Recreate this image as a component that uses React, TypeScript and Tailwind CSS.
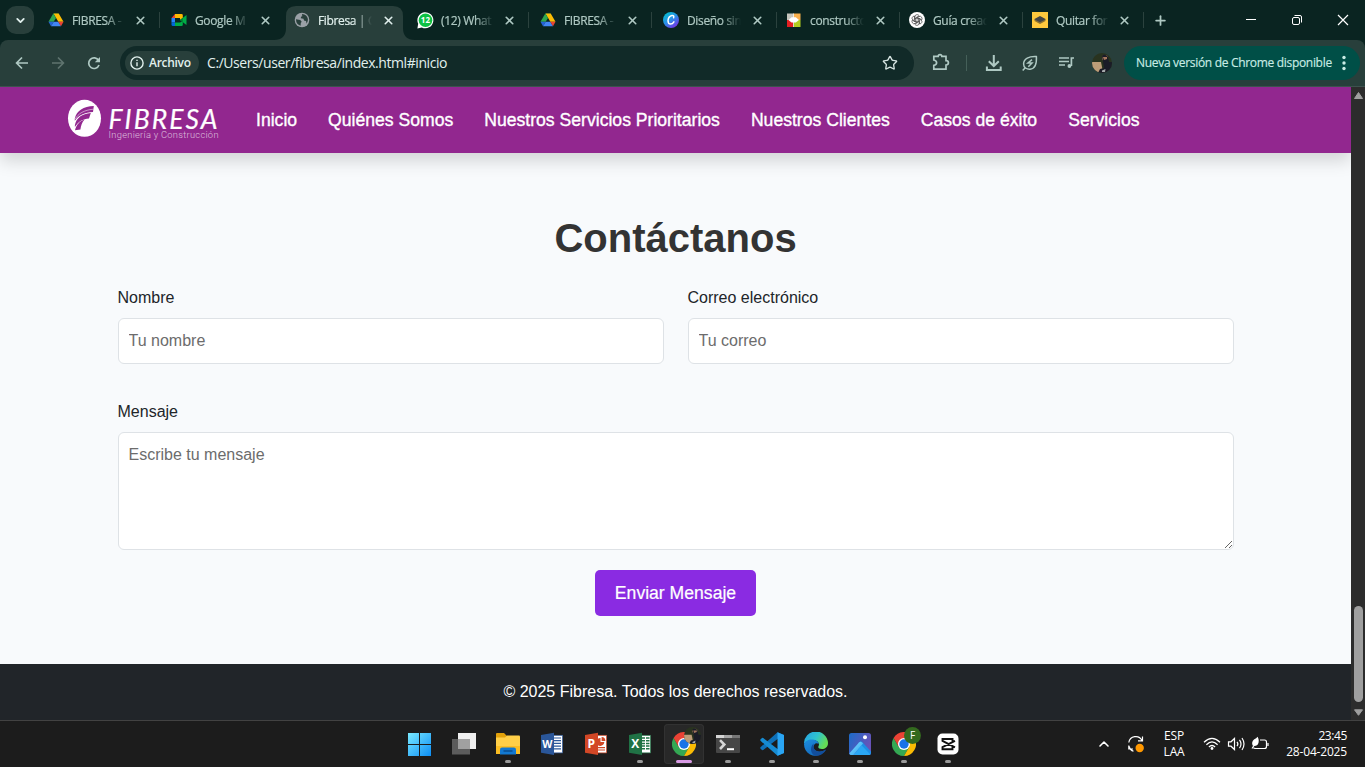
import React from "react";
import { Star, X, Plus, ChevronDown, ChevronUp } from "lucide-react";

const ui = "font-['Open_Sans','Noto_Sans',sans-serif]";

/* ---------- favicons ---------- */

function DriveIcon() {
  return (
    <svg width="16" height="16" viewBox="0 0 16 16">
      <path d="M5.3 1.5 L10.7 1.5 L8 5.8 Z" fill="#188038" />
      <path d="M10.7 1.5 L15.5 9.8 L10.3 9.8 L8 5.8 L5.5 1.5 Z" fill="#fbbc04" />
      <path d="M5.3 1.5 L8 6 L5.7 9.8 L0.5 9.8 Z" fill="#2fa84f" />
      <path d="M0.5 9.8 L5.7 9.8 L3 14.2 Z" fill="#2563d8" />
      <path d="M5.7 9.8 L10.3 9.8 L13 14.2 L3 14.2 Z" fill="#4285f4" />
      <path d="M10.3 9.8 L15.5 9.8 L13 14.2 Z" fill="#ea4335" />
    </svg>
  );
}

function MeetIcon() {
  return (
    <svg width="16" height="16" viewBox="0 0 16 16">
      <path d="M4 2 V6 H0.5 Z" fill="#ea4335" />
      <path d="M0.5 6 H4 V10.5 H0.5 Z" fill="#2684fc" />
      <path d="M0.5 10.5 H4 V14 H2 Q0.5 14 0.5 12.5 Z" fill="#0066da" />
      <path d="M4 10.5 H9 L11.8 9 V12.8 Q11.8 14 10.5 14 H4 Z" fill="#00ac47" />
      <path d="M4 2 H10.5 Q11.8 2 11.8 3.3 V6 L9 8 V6 H4 Z" fill="#ffba00" />
      <path d="M9 8 L15.5 3 V13 Z" fill="#00ac47" />
      <path d="M9 8 L11.8 5.8 V10.3 Z" fill="#00832d" />
    </svg>
  );
}

function GlobeIcon() {
  return (
    <svg width="16" height="16" viewBox="0 0 16 16">
      <circle cx="8" cy="8" r="7.3" fill="#9aa0a6" />
      <path d="M2 7.3 L6.2 8 L7.7 9.8 L6.8 11 L6.6 13.8 Q2 12.3 2 7.3 Z" fill="#283f3b" />
      <path d="M8.2 2 Q7.3 3.4 8.6 4.1 Q6.4 4.4 6.8 6.2 L9.5 6.7 Q9.7 9.3 12 8.8 L12.6 11.7 Q14.2 9.6 13.9 7 Q13 2.4 8.2 2 Z" fill="#283f3b" />
    </svg>
  );
}

function WhatsIcon() {
  return (
    <svg width="17" height="17" viewBox="0 0 17 17" className="shrink-0">
      <path d="M0.4 16.5 L1.2 11.8 A8 8 0 1 1 4.8 15.4 Z" fill="#fff" />
      <circle cx="8.5" cy="8.2" r="6.8" fill="#0dc143" />
      <text x="8.4" y="11.1" textAnchor="middle" fontSize="8" fontWeight="700" fill="#fff" fontFamily="Open Sans">12</text>
    </svg>
  );
}

function CanvaIcon() {
  return (
    <svg width="16" height="16" viewBox="0 0 16 16">
      <defs>
        <linearGradient id="canva" x1="0.1" y1="0" x2="0.8" y2="1">
          <stop offset="0" stopColor="#00c4cc" />
          <stop offset="0.5" stopColor="#2a8fe8" />
          <stop offset="1" stopColor="#7d2ae8" />
        </linearGradient>
      </defs>
      <circle cx="8" cy="8" r="8" fill="url(#canva)" />
      <path d="M10.6 5.8 Q11.4 3.3 9 3.5 Q5.4 4.2 5 8.5 Q5 12 7.5 12.1 Q9.6 12 10.9 9.8" fill="none" stroke="#fff" strokeWidth="1.5" strokeLinecap="round" />
    </svg>
  );
}

function MosaicIcon() {
  return (
    <svg width="16" height="16" viewBox="0 0 16 16">
      <path d="M1 1.5 H7.5 V8 H1 Z" fill="#c5c5bd" />
      <path d="M7.5 1.5 H14.5 V8 H7.5 Z" fill="#f9b04c" />
      <path d="M1 8 H7.5 V15 H1 Z" fill="#e51f22" />
      <path d="M8 8 H14.5 V15 H8 Z" fill="#b3cd1f" />
      <path d="M7.5 1.5 V15" stroke="#fff" strokeWidth="0.8" />
      <path d="M5.5 5.2 H9.8 L13 8 L9.8 10.6 H5.5 L2.5 8 Z" fill="#fff" />
    </svg>
  );
}

function GptIcon() {
  return (
    <svg width="16" height="16" viewBox="0 0 16 16">
      <circle cx="8" cy="8" r="8" fill="#fff" />
      <g fill="none" stroke="#333" strokeWidth="0.65">
        {[0, 60, 120, 180, 240, 300].map((a) => (
          <path key={a} d="M6 9.2 V4.6 Q6.1 2.6 8 2.6 Q9.4 2.6 10.2 3.8 L7.2 5.5 V7.5" transform={`rotate(${a} 8 8)`} />
        ))}
      </g>
    </svg>
  );
}

function LayersIcon() {
  return (
    <svg width="16" height="16" viewBox="0 0 16 16">
      <path d="M0 0 H16 V16 H0 Z" fill="#ffc83d" />
      <path d="M8 5.5 L14 8.8 L8 12 L2 8.8 Z" fill="#8d7231" />
      <path d="M8 4 L14 7.2 L8 10.3 L2 7.2 Z" fill="#454545" />
    </svg>
  );
}

interface TabData {
  title: string;
  icon: React.ReactNode;
  active?: boolean;
  line?: boolean;
}

const tabs: TabData[] = [
  { title: "FIBRESA -", icon: <DriveIcon />, line: true },
  { title: "Google M", icon: <MeetIcon /> },
  { title: "Fibresa | C", icon: <GlobeIcon />, active: true },
  { title: "(12) What", icon: <WhatsIcon />, line: true },
  { title: "FIBRESA -", icon: <DriveIcon />, line: true },
  { title: "Diseño sin", icon: <CanvaIcon />, line: true },
  { title: "constructo", icon: <MosaicIcon />, line: true },
  { title: "Guía creac", icon: <GptIcon />, line: true },
  { title: "Quitar for", icon: <LayersIcon />, line: true },
];

function Tab({ title, icon, active, line }: TabData) {
  return (
    <div className="relative h-10 w-[123px] shrink-0">
      {active && (
        <svg className="absolute -left-[9px] top-0" width="141" height="40" viewBox="0 0 141 40">
          <path d="M0 40 Q12 40 12 28 V16 Q12 6 22 6 H119 Q129 6 129 16 V28 Q129 40 141 40 Z" fill="#283f3b" />
        </svg>
      )}
      <div className="relative flex h-full items-center pl-[11px]">
        <span className="flex w-4 shrink-0 justify-center">{icon}</span>
        <span
          className={`ml-2 w-[54px] whitespace-nowrap pt-px text-[12px] leading-5 tracking-[-0.35px] [mask-image:linear-gradient(to_right,black_64%,transparent_100%)] [-webkit-text-stroke:0.2px_currentColor] ${active ? "text-[#e1f0ed]" : "text-[#afc9c3]"}`}
        >
          {title}
        </span>
        <X className={`ml-[9.5px] shrink-0 ${active ? "text-[#e1f0ed]" : "text-[#afc9c3]"}`} size={13} strokeWidth={3} />
        {line && <span className="ml-[12px] h-4 w-px shrink-0 bg-[#2b423e]" />}
      </div>
    </div>
  );
}

function TabStrip() {
  return (
    <div className="flex h-10 items-center bg-[#0a2421]">
      <div className="flex w-[37px] shrink-0 pl-1.5">
        <div className="flex h-7 w-7 items-center justify-center rounded-[10px] bg-[#283f3b] text-[#e1f0ed]">
          <ChevronDown size={13} strokeWidth={3.4} />
        </div>
      </div>
      {tabs.map((t, i) => (
        <Tab key={i} {...t} />
      ))}
      <Plus className="ml-[9px] shrink-0 text-[#afc9c3]" size={15} strokeWidth={2.8} />
      <div className="ml-auto flex text-white">
        <svg width="138" height="40" viewBox="0 0 138 40" fill="none" stroke="currentColor">
          <path d="M19 19.5 H29" />
          <rect x="65.5" y="17.5" width="7" height="7" rx="1.5" />
          <path d="M67.5 15.5 H73 Q74.5 15.5 74.5 17 V22.5" />
          <path d="M111 15 L121 25 M121 15 L111 25" strokeWidth="1.2" />
        </svg>
      </div>
    </div>
  );
}

function Avatar({ size }: { size: number }) {
  return (
    <svg width={size} height={size} viewBox="0 0 20 20" stroke="none">
      <defs>
        <clipPath id={`av${size}`}><circle cx="10" cy="10" r="10" /></clipPath>
      </defs>
      <g clipPath={`url(#av${size})`}>
        <path d="M0 0 H20 V20 H0 Z" fill="#29331f" />
        <path d="M0 9 H9 L11 19 H0 Z" fill="#bd9d78" />
        <circle cx="13" cy="5" r="3" fill="#a5775e" />
        <path d="M10 3 Q13 0 16 4 L17 9 H20 V16 L17 20 H6 L8 16 L12 15 L11 8 Z" fill="#1b1c27" />
        <path d="M11 4 H15 V6 L12 7 Z" fill="#a5775e" />
        <path d="M10 17.5 L13.5 16 L13 19 H10 Z" fill="#a6aaab" />
      </g>
    </svg>
  );
}

function Toolbar() {
  return (
    <div className="flex h-[47px] items-center border-b border-[#3d524e] bg-[#0a2421]">
      <div className="flex h-full w-full items-center rounded-t-[8px] bg-[#283f3b]">
        <svg width="120" height="46" viewBox="0 0 120 46" fill="none" strokeWidth="1.7" className="shrink-0">
          <path d="M28 23 H17 M22 17.5 L16.6 23 L22 28.5" stroke="#afc9c3" />
          <path d="M52 23 H63 M58 17.5 L63.4 23 L58 28.5" stroke="#5f746f" />
          <path d="M98.6 20.5 A5.3 5.3 0 1 0 99 25" stroke="#afc9c3" />
          <path d="M100 17 V22.2 H94.8 Z" fill="#afc9c3" />
        </svg>
        <div className="flex h-[34px] w-[794px] shrink-0 items-center rounded-full bg-[#112a28] pl-[5px] pr-4">
          <div className="flex h-6 w-[74px] items-center rounded-full bg-[#283f3b] pl-[5px] text-[#e1f0ed]">
            <svg width="14" height="14" viewBox="0 0 14 14" fill="none" stroke="currentColor" strokeWidth="1.4">
              <circle cx="7" cy="7" r="6.1" />
              <path d="M7 6.2 V10.3 M7 3.7 V5.1" />
            </svg>
            <span className="ml-[5px] text-[12px] font-semibold tracking-[-0.3px]">Archivo</span>
          </div>
          <span className="ml-2 whitespace-nowrap pb-px text-[14px] leading-5 tracking-[-0.43px] text-[#e1f0ed]">C:/Users/user/fibresa/index.html#inicio</span>
          <Star className="ml-auto text-[#d6e4e1]" size={16} strokeWidth={2} strokeLinejoin="miter" />
        </div>
        <svg width="200" height="46" viewBox="914 40 200 46" fill="none" stroke="#afc9c3" strokeWidth="1.7" className="shrink-0">
          <path d="M933.8 56.3 H938.2 Q938.2 54.6 940 54.6 Q941.8 54.6 941.8 56.3 H946 V60.6 Q948.4 60.6 948.4 62.8 Q948.4 65 946 65 V69.2 H933.8 V65.4 Q936.6 65 936.6 62.8 Q936.6 60.4 933.8 60 Z" />
          <path d="M966.5 55 V71" stroke="#456059" strokeWidth="1" />
          <path d="M993.8 55 V66 M988.8 61.2 L993.8 66 L998.8 61.2 M986.9 66.5 V70 H1000.7 V66.5" strokeWidth="2" />
          <path d="M1036.4 56.6 C1029 56.2 1023.6 58.5 1023.6 64 C1023.6 67.5 1026.6 69.4 1030 69.2 C1035.5 68.7 1036.8 63.5 1036.4 56.6 Z M1022.7 70.6 L1025 68" strokeWidth="1.5" />
          <path d="M1032 59.7 L1028 63 H1032 L1028.3 66.8" strokeWidth="1.5" />
          <path d="M1059 58 H1069 M1059 61.5 H1069 M1059 65 H1065 M1074 58 H1071.4 V66" />
          <circle cx="1069.4" cy="66" r="1.9" fill="#afc9c3" stroke="none" />
          <svg x="1092" y="53" width="20" height="20"><Avatar size={20} /></svg>
        </svg>
        <div className="ml-[10px] flex h-[34px] w-[236px] shrink-0 items-center rounded-full bg-[#004f47] pl-3 text-[12px] tracking-[-0.31px] text-[#c9ece5]">
          <span className="whitespace-nowrap [-webkit-text-stroke:0.15px_currentColor]">Nueva versión de Chrome disponible</span>
          <svg className="ml-auto mr-[14px]" width="4" height="16" viewBox="0 0 4 16" fill="currentColor">
            <circle cx="2" cy="2.5" r="1.7" /><circle cx="2" cy="8" r="1.7" /><circle cx="2" cy="13.5" r="1.7" />
          </svg>
        </div>
      </div>
    </div>
  );
}

/* ---------- page ---------- */

function Logo() {
  return (
    <svg width="154" height="44" viewBox="67 98 154 44" className="shrink-0">
      <ellipse cx="84.5" cy="118.3" rx="16.5" ry="18.5" fill="#fff" />
      <path d="M74.8 118.5 C76.5 110.5 83.5 106.4 93.8 106 L93 112 C85 112.2 78 115.4 74.8 120.8 Z" fill="#92278f" />
      <path d="M74.9 125 C76.5 117.6 82 113.8 90.8 113 L89 118.4 C83 118.8 78.2 121.4 74.9 127 Z" fill="#92278f" />
      <path d="M75 130.2 C76.4 125 79.6 121 84.6 119.6 C81.8 122.6 81 126 80.4 129.6 Z" fill="#92278f" />
      <path d="M75.3 119 C78 113.7 84 110 93.4 109.2" fill="none" stroke="#fff" strokeWidth="0.5" />
      <text x="108.5" y="129" textLength="109" lengthAdjust="spacing" fontFamily="Lato" fontStyle="italic" fontSize="26.5" fill="#fff" stroke="#fff" strokeWidth="0.2">FIBRESA</text>
      <text x="108.5" y="138" textLength="110" lengthAdjust="spacing" fontFamily="Roboto" fontWeight="300" fontSize="9.3" fill="#fff" fillOpacity="0.7">Ingeniería y Construcción</text>
    </svg>
  );
}

const links = ["Inicio", "Quiénes Somos", "Nuestros Servicios Prioritarios", "Nuestros Clientes", "Casos de éxito", "Servicios"];

function Field({ label, placeholder }: { label: string; placeholder: string }) {
  return (
    <label className="flex flex-1 flex-col">
      <span className="leading-6">{label}</span>
      <input
        className="mt-2 h-[46px] w-full rounded-md border border-[#dee2e6] bg-white px-[10px] placeholder:text-[#6c6c6c] placeholder:opacity-100"
        placeholder={placeholder}
      />
    </label>
  );
}

function Page() {
  return (
    <div className="flex min-w-0 flex-1 flex-col overflow-hidden bg-[#f8fafc] font-['Liberation_Sans',Arial,sans-serif] text-[16px] text-[#212529]">
      <nav className="relative flex h-[66px] shrink-0 items-center bg-[#92278f] pl-[67px] shadow-[0_8px_16px_rgba(0,0,0,0.15)]">
        <Logo />
        <div className="ml-[35px] flex gap-[31px] text-[17.6px] text-white [-webkit-text-stroke:0.35px_white]">
          {links.map((l) => (
            <a key={l} className="whitespace-nowrap">{l}</a>
          ))}
        </div>
      </nav>
      <main className="flex h-[511px] shrink-0 flex-col px-[117.5px] pt-[61px]">
        <h2 className="text-center text-[40px] font-bold leading-[48px] text-[#333]">Contáctanos</h2>
        <form className="mt-6 flex flex-col">
          <div className="flex gap-6">
            <Field label="Nombre" placeholder="Tu nombre" />
            <Field label="Correo electrónico" placeholder="Tu correo" />
          </div>
          <label className="mt-9 flex flex-col">
            <span className="leading-6">Mensaje</span>
            <textarea
              className="mt-2 h-[118px] w-full resize-y rounded-md border border-[#dee2e6] bg-white px-[10px] py-[10px] placeholder:text-[#6c6c6c] placeholder:opacity-100"
              placeholder="Escribe tu mensaje"
            />
          </label>
          <button type="button" className="mt-5 h-[46px] w-[161px] self-center rounded-[5px] bg-[#8a2be2] text-[17.6px] text-white [-webkit-text-stroke:0.2px_white]">
            Enviar Mensaje
          </button>
        </form>
      </main>
      <footer className="flex h-14 shrink-0 items-center justify-center bg-[#212529] text-white">
        <p>© 2025 Fibresa. Todos los derechos reservados.</p>
      </footer>
    </div>
  );
}

function Scrollbar() {
  return (
    <div className="flex w-[14px] shrink-0 flex-col items-center bg-[#2c2c2c]">
      <svg width="14" height="14" viewBox="0 0 14 14"><path d="M7.5 5.5 L11.5 11.5 H3.5 Z" fill="#9f9f9f" stroke="#9f9f9f" strokeLinejoin="round" /></svg>
      <div className="ml-[1px] mt-[505px] h-[96px] w-[9px] rounded-full bg-[#9f9f9f]" />
      <svg className="mt-auto" width="14" height="14" viewBox="0 0 14 14"><path d="M3.5 3.8 H11.5 L7.5 9.3 Z" fill="#9f9f9f" stroke="#9f9f9f" strokeLinejoin="round" /></svg>
    </div>
  );
}

/* ---------- taskbar ---------- */

function StartIcon() {
  return (
    <svg width="24" height="24" viewBox="0 0 24 24">
      <defs>
        <linearGradient id="win" x1="0" y1="0" x2="24" y2="24" gradientUnits="userSpaceOnUse">
          <stop offset="0" stopColor="#7cebff" /><stop offset="1" stopColor="#0a8cf5" />
        </linearGradient>
      </defs>
      <path d="M0 1 H11 V12 H0 Z M12 1 H23 V12 H12 Z M0 13 H11 V24 H0 Z M12 13 H23 V24 H12 Z" fill="url(#win)" />
    </svg>
  );
}

function TaskViewIcon() {
  return (
    <svg width="24" height="24" viewBox="0 0 24 24">
      <path d="M6 1 H24 V17 H6 Z" fill="#efefef" />
      <path d="M0 7 H18 V22.5 H0 Z" fill="#5c5c5c" />
      <path d="M6 7 H18 V17 H6 Z" fill="#a0a0a0" />
    </svg>
  );
}

function FolderIcon() {
  return (
    <svg width="24" height="24" viewBox="0 0 24 24">
      <path d="M0 2 Q0 1 1 1 H8 L11 4 H12 V10 H0 Z" fill="#e2a10a" />
      <path d="M0 5.5 H9 L11 3.6 H23 Q24 3.6 24 5 V22 H0 Z" fill="#ffcf48" />
      <path d="M0 14 H24 V22 H0 Z" fill="#fbbd22" />
      <path d="M4 22.5 V17.5 Q4 15.6 6 15.6 H18 Q20 15.6 20 17.5 V22.5 Z" fill="#1278d0" />
      <path d="M7.5 19 H16.5" stroke="#0b4f93" strokeWidth="1.6" />
    </svg>
  );
}

function OfficeIcon({ letter, color }: { letter: string; color: string }) {
  return (
    <svg width="24" height="24" viewBox="0 0 24 24">
      <rect x="12" y="3.3" width="10.6" height="17.6" fill="#fff" stroke={color} strokeWidth="0.7" />
      {letter === "W" && <path d="M14 6 H21 M14 8.7 H21 M14 11.4 H21 M14 14.1 H21 M14 16.8 H21" stroke={color} strokeWidth="1.2" />}
      {letter === "P" && (
        <g fill={color}>
          <path d="M16.5 6 V10 H20.3 A4 4 0 1 1 16.5 6 Z M17.6 5 A4 4 0 0 1 21.4 8.9 H17.6 Z" />
          <path d="M14 15 H21 V16.2 H14 Z M14 17.6 H21 V18.6 H14 Z" />
        </g>
      )}
      {letter === "X" && <path d="M14 6 H17 M18 6 H21.5 M14 8.7 H17 M18 8.7 H21.5 M14 11.4 H17 M18 11.4 H21.5 M14 14.1 H17 M18 14.1 H21.5 M14 16.8 H17 M18 16.8 H21.5" stroke={color} strokeWidth="1.5" />}
      <path d="M1 3 L14 0.8 V23 L1 20.7 Z" fill={color} />
      <text x="7.3" y="16.2" textAnchor="middle" fontFamily="Open Sans" fontWeight="700" fontSize={letter === "W" ? 10.5 : 12} fill="#fff">{letter}</text>
    </svg>
  );
}

function ChromeIcon() {
  return (
    <svg width="24" height="24" viewBox="0 0 24 24">
      <path d="M1.6 6 A12 12 0 0 0 12 24 L17.2 15 L12 12 L6.8 15 Z" fill="#34a853" />
      <path d="M12 6 H22.4 A12 12 0 0 1 12 24 L17.2 15 Z" fill="#fbbc04" />
      <path d="M1.6 6 A12 12 0 0 1 22.4 6 H12 L6.8 15 Z" fill="#ea4335" />
      <circle cx="12" cy="12" r="6" fill="#fff" />
      <circle cx="12" cy="12" r="4.7" fill="#1a73e8" />
    </svg>
  );
}

function TerminalIcon() {
  return (
    <svg width="24" height="24" viewBox="0 0 24 24">
      <rect x="0" y="3" width="24" height="18" rx="1" fill="#464646" />
      <path d="M0 3 H8 V6 H0 Z" fill="#d4d4d4" /><path d="M8 3 H16 V6 H8 Z" fill="#a5a5a5" /><path d="M16 3 H24 V6 H16 Z" fill="#777" />
      <path d="M4 8.2 L8.3 12.5 L4 17" fill="none" stroke="#d6d6d6" strokeWidth="2.6" />
      <path d="M11 17.2 H18" stroke="#fff" strokeWidth="2" />
    </svg>
  );
}

function CodeIcon() {
  return (
    <svg width="24" height="24" viewBox="0 0 24 24">
      <path d="M17.5 0.2 L24 3 V6 L17.5 7 L3.2 18 Q2.6 18.3 2 18 L0.4 16.5 Q0 15.8 0.5 15.2 Z" fill="#0e70b8" />
      <path d="M17.5 23.8 L24 21 V18 L17.5 17 L3.2 6 Q2.6 5.7 2 6 L0.4 7.5 Q0 8.2 0.5 8.8 Z" fill="#168bd2" />
      <path d="M17.5 0.2 L24 3 V21 L17.5 23.8 Z" fill="#2aa5f3" />
    </svg>
  );
}

function EdgeIcon() {
  return (
    <svg width="24" height="24" viewBox="0 0 24 24">
      <defs>
        <linearGradient id="edgeTop" x1="0" y1="0" x2="1" y2="0.45">
          <stop offset="0" stopColor="#249fe8" /><stop offset="0.55" stopColor="#2fc3ce" /><stop offset="1" stopColor="#65dc55" />
        </linearGradient>
        <linearGradient id="edgeLow" x1="0" y1="0" x2="0.7" y2="1">
          <stop offset="0" stopColor="#1c8ee0" /><stop offset="1" stopColor="#1366b8" />
        </linearGradient>
      </defs>
      <path d="M0 12 A12 12 0 0 1 24 11 C24 15 21 17 18 17 C15 17 13.6 15.6 14.5 14.2 C16 12 14 8 9 8 C4 8 0 11 0 12 Z" fill="url(#edgeTop)" />
      <path d="M0 12 C1 8.5 5 7 9 7.5 C12 8 14.2 9.6 14.7 12 C12 9.8 9.2 12.5 9.5 15.5 C10 19.5 16 21.4 22 17.6 C18 24 11 25 6 22.4 C2 20 0 16.5 0 12 Z" fill="url(#edgeLow)" />
      <path d="M9.5 14 C9.5 19.5 16 21.4 22 17.6 C20 21.5 16 24 12 24 C7 23 5 16 9.5 11.5 Z" fill="#124e9c" />
    </svg>
  );
}

function PhotosIcon() {
  return (
    <svg width="24" height="24" viewBox="0 0 24 24">
      <defs>
        <linearGradient id="pho" x1="0" y1="0" x2="1" y2="0.5"><stop offset="0" stopColor="#1b6cc8" /><stop offset="1" stopColor="#6a52b8" /></linearGradient>
        <linearGradient id="pho2" x1="0" y1="0" x2="1" y2="1"><stop offset="0" stopColor="#8fe3ff" /><stop offset="1" stopColor="#209df1" /></linearGradient>
      </defs>
      <rect x="1" y="1" width="22" height="22" rx="2.5" fill="url(#pho)" />
      <path d="M10 12.5 L11.5 10 Q12.8 8.4 14.2 10 L23 19.5 V21 Q23 23 21 23 H12 Z" fill="#1d8fe6" />
      <path d="M1.3 21.5 L11 10.5 Q12.5 9 14 10.5 L15 11.5 L5.5 23 H3.5 Q1.8 23 1.3 21.5 Z" fill="url(#pho2)" />
      <path d="M5.5 23 L13.5 13.2 L22.4 22.5 L21 23 Z" fill="#2aa7f4" />
      <circle cx="17" cy="5.3" r="2" fill="#fff" />
    </svg>
  );
}

function CapcutIcon() {
  return (
    <svg width="24" height="24" viewBox="0 0 24 24">
      <rect x="1.5" y="1.5" width="21" height="21" rx="5" fill="#fff" />
      <path d="M19 8.9 L6.5 15.2 V17.2 H16.5 V15 M19 15.4 L6.5 8.9 V7 H16.5 V9.2" fill="none" stroke="#111" strokeWidth="1.9" />
    </svg>
  );
}

interface AppItem {
  icon: React.ReactNode;
  dot?: boolean;
  active?: boolean;
  badge?: React.ReactNode;
}

const apps: AppItem[] = [
  { icon: <StartIcon /> },
  { icon: <TaskViewIcon /> },
  { icon: <FolderIcon />, dot: true },
  { icon: <OfficeIcon letter="W" color="#2a5699" /> },
  { icon: <OfficeIcon letter="P" color="#d24726" /> },
  { icon: <OfficeIcon letter="X" color="#207245" />, dot: true },
  { icon: <ChromeIcon />, active: true, badge: <Avatar size={17} /> },
  { icon: <TerminalIcon />, dot: true },
  { icon: <CodeIcon />, dot: true },
  { icon: <EdgeIcon />, dot: true },
  { icon: <PhotosIcon />, dot: true },
  {
    icon: <ChromeIcon />,
    dot: true,
    badge: <span className="flex h-[17px] w-[17px] items-center justify-center rounded-full bg-[#33691e] text-[10px] text-white">F</span>,
  },
  { icon: <CapcutIcon />, dot: true },
];

function Taskbar() {
  return (
    <div className="flex h-[47px] shrink-0 items-center border-t border-[#424242] bg-[#1c1c1c] text-white">
      <div className="ml-[398px] flex">
        {apps.map((a, i) => (
          <div key={i} className="flex w-11 justify-center">
            <div className={`relative flex h-10 w-10 flex-col items-center rounded pt-2 ${a.active ? "bg-[#282828] ring-1 ring-inset ring-[#323232]" : ""}`}>
              {a.icon}
              {a.badge && <span className="absolute right-[3px] top-[3px]">{a.badge}</span>}
              {a.dot && <span className="mt-[4px] h-[3px] w-1.5 rounded-full bg-[#9a9a9a]" />}
              {a.active && <span className="mt-[4px] h-[3px] w-4 rounded-full bg-[#d99be5]" />}
            </div>
          </div>
        ))}
      </div>
      <ChevronUp className="ml-[126px] shrink-0" size={16} strokeWidth={2.4} />
      <svg className="ml-[15px] shrink-0" width="18" height="18" viewBox="0 0 18 18" fill="none" stroke="currentColor" strokeWidth="1.2">
        <path d="M1.8 7.5 A7 7 0 0 1 15 5.5 M15.5 1.5 V5.8 H11 M6 14 H1.8 V10.5 M2 11.3 Q3.2 15.3 6.5 16.3" />
        <circle cx="12.7" cy="13" r="4.2" fill="#ff9800" stroke="none" />
      </svg>
      <div className="ml-[17px] w-6 shrink-0 text-center text-[12px] leading-4 tracking-[-0.2px]">
        <p>ESP</p>
        <p>LAA</p>
      </div>
      <svg className="ml-[17px] shrink-0" width="66" height="16" viewBox="0 0 66 16" fill="none" stroke="currentColor" strokeWidth="1.2">
        <path d="M1 6.3 Q9 -1.5 17 6.3 M3.4 8.7 Q9 3.2 14.6 8.7 M5.9 11 Q9 8 12.1 11" />
        <circle cx="9" cy="12.5" r="1.4" fill="currentColor" stroke="none" />
        <path d="M25.5 5.8 H28 L31.5 2.5 V13.5 L28 10.2 H25.5 Z M34 5.8 Q35.8 8 34 10.2 M36.5 3.8 Q39.5 8 36.5 12.2 M39 2 Q43 8 39 14" />
        <path d="M57 4 H61.5 Q63.5 4 63.5 6 V10.5 Q63.5 12.5 61.5 12.5 H52.5 Q50.5 12.5 50.5 11.5 M65 7 V10" />
        <path d="M54.6 0.8 Q56.8 5 54.8 8.5 Q53 10.6 49.6 9.5 Q48.2 6 51 3.6 Q53.4 2.6 54.6 0.8 Z" fill="currentColor" stroke="none" />
        <path d="M52 8 L49 12.5" />
      </svg>
      <div className="ml-auto mr-[18px] shrink-0 text-right text-[12px] leading-4 tracking-[-0.18px]">
        <p className="tracking-[-0.4px]">23:45</p>
        <p>28-04-2025</p>
      </div>
    </div>
  );
}

export default function App() {
  return (
    <div className={`flex h-[767px] w-[1365px] flex-col overflow-hidden ${ui}`}>
      <TabStrip />
      <Toolbar />
      <div className="flex h-[633px] shrink-0">
        <Page />
        <Scrollbar />
      </div>
      <Taskbar />
    </div>
  );
}
